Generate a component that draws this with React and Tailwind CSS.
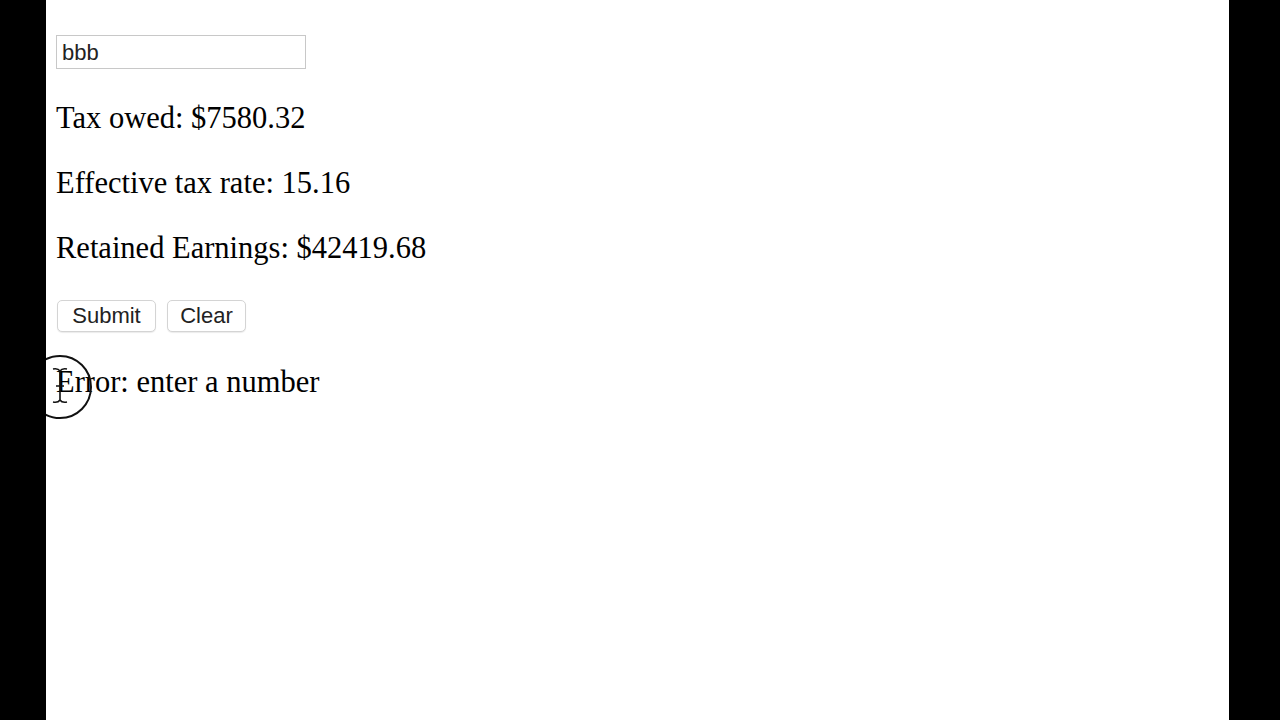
export default function App() {
  return (
    <div className="w-[1280px] h-[720px] bg-black flex overflow-hidden">
      <div className="ml-[46px] w-[1183px] h-full bg-white relative overflow-hidden font-['Liberation_Serif',serif] text-black">
        <div className="pt-[35px] pl-[10px]">
          <input
            type="text"
            defaultValue="bbb"
            className="w-[250px] h-[34px] border border-[#c8c8c8] pl-[5px] pt-[2px] text-[22px] font-['Liberation_Sans',sans-serif] text-[#222] outline-none"
          />
          <p className="mt-[29px] text-[30.5px] leading-[40px]">Tax owed: $7580.32</p>
          <p className="mt-[25px] text-[30.5px] leading-[40px]">Effective tax rate: 15.16</p>
          <p className="mt-[25px] text-[30.5px] leading-[40px]">Retained Earnings: $42419.68</p>
          <div className="mt-[32px] flex gap-[11px] pl-[1px] font-['Liberation_Sans',sans-serif]">
            <button className="w-[99px] h-[32px] border border-[#d4d4d4] rounded-[5px] bg-white text-[22px] leading-none text-[#222] shadow-[0_1px_1px_rgba(0,0,0,0.08)]">
              Submit
            </button>
            <button className="w-[79px] h-[32px] border border-[#d4d4d4] rounded-[5px] bg-white text-[22px] leading-none text-[#222] shadow-[0_1px_1px_rgba(0,0,0,0.08)]">
              Clear
            </button>
          </div>
          <p className="mt-[30px] text-[30.5px] leading-[40px]">Error: enter a number</p>
        </div>
        <svg className="absolute left-[-16px] top-[350px]" width="64" height="76" viewBox="0 0 64 76">
          <circle cx="30" cy="37" r="31" fill="none" stroke="#111" strokeWidth="2" />
          <path d="M23 19 Q28 18 30 21 Q32 18 37 19 M30 21 L30 50 M23 52 Q28 53 30 50 Q32 53 37 52 M26 36 L34 36" fill="none" stroke="#111" strokeWidth="1.6" />
        </svg>
      </div>
    </div>
  );
}
